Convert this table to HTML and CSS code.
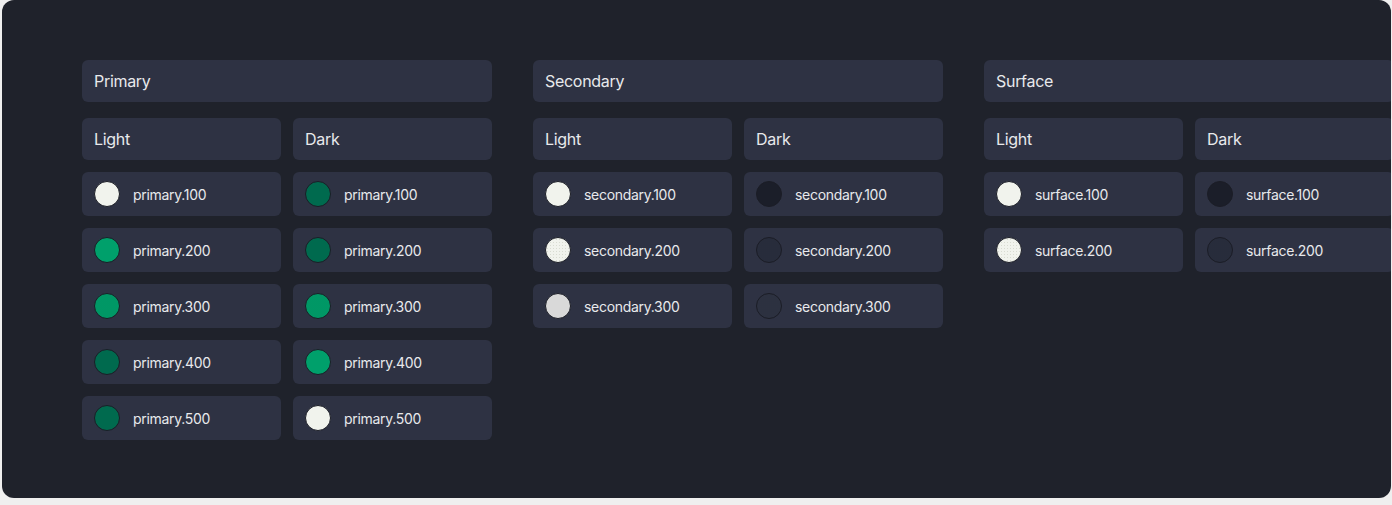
FILE: index.html
```html
<!DOCTYPE html>
<html lang="en">
<head>
    <meta charset="UTF-8">
    <title>Color Tokens</title>
    <link rel="stylesheet" href="styles.css">
</head>
<body>
    <div class="panel">
        <div class="groups">
            <div class="group">
                <div class="group-title">Primary</div>
                <div class="modes">
                    <div class="mode">
                        <div class="mode-title">Light</div>
                        <div class="token"><span class="swatch c-light"></span>primary.100</div>
                        <div class="token"><span class="swatch c-green"></span>primary.200</div>
                        <div class="token"><span class="swatch c-green dots"></span>primary.300</div>
                        <div class="token"><span class="swatch c-deep"></span>primary.400</div>
                        <div class="token"><span class="swatch c-deep"></span>primary.500</div>
                    </div>
                    <div class="mode">
                        <div class="mode-title">Dark</div>
                        <div class="token"><span class="swatch c-deep"></span>primary.100</div>
                        <div class="token"><span class="swatch c-deep"></span>primary.200</div>
                        <div class="token"><span class="swatch c-green dots"></span>primary.300</div>
                        <div class="token"><span class="swatch c-green"></span>primary.400</div>
                        <div class="token"><span class="swatch c-light"></span>primary.500</div>
                    </div>
                </div>
            </div>

            <div class="group">
                <div class="group-title">Secondary</div>
                <div class="modes">
                    <div class="mode">
                        <div class="mode-title">Light</div>
                        <div class="token"><span class="swatch c-light"></span>secondary.100</div>
                        <div class="token"><span class="swatch c-light dots-soft"></span>secondary.200</div>
                        <div class="token"><span class="swatch c-grey"></span>secondary.300</div>
                    </div>
                    <div class="mode">
                        <div class="mode-title">Dark</div>
                        <div class="token"><span class="swatch c-night"></span>secondary.100</div>
                        <div class="token"><span class="swatch c-dusk dots-dark"></span>secondary.200</div>
                        <div class="token"><span class="swatch c-slate dots-dark"></span>secondary.300</div>
                    </div>
                </div>
            </div>

            <div class="group">
                <div class="group-title">Surface</div>
                <div class="modes">
                    <div class="mode">
                        <div class="mode-title">Light</div>
                        <div class="token"><span class="swatch c-light"></span>surface.100</div>
                        <div class="token"><span class="swatch c-light dots-soft"></span>surface.200</div>
                    </div>
                    <div class="mode">
                        <div class="mode-title">Dark</div>
                        <div class="token"><span class="swatch c-night"></span>surface.100</div>
                        <div class="token"><span class="swatch c-dusk dots-dark"></span>surface.200</div>
                    </div>
                </div>
            </div>
        </div>
    </div>
</body>
</html>
```

FILE: styles.css
```css
body {
    margin: 0;
    background-color: #efefef;
    font-family: Inter, "Noto Sans", sans-serif;
}
.panel {
    margin-left: 2px;
    width: 1389px;
    height: 498px;
    background-color: #1f222b;
    border-radius: 12px;
    overflow: hidden;
    box-sizing: border-box;
    padding: 60px 0 0 80px;
}
.groups {
    display: flex;
    gap: 41px;
}
.group {
    flex: 0 0 410px;
}
.group-title, .mode-title, .token {
    background-color: #2e3243;
    border-radius: 6px;
    color: #e8e9ec;
    display: flex;
    align-items: center;
    letter-spacing: -0.3px;
}
.group-title {
    height: 42px;
    padding-left: 12px;
    font-size: 16px;
    margin-bottom: 16px;
}
.modes {
    display: flex;
    gap: 12px;
}
.mode {
    flex: 1;
    display: flex;
    flex-direction: column;
    gap: 12px;
}
.mode-title {
    height: 42px;
    padding-left: 12px;
    font-size: 16px;
}
.token {
    height: 44px;
    padding-left: 12px;
    font-size: 14px;
    gap: 13px;
}
.swatch {
    width: 24px;
    height: 24px;
    border-radius: 50%;
    border: 1.5px solid #1b1d26;
    flex: none;
}
.c-light { background-color: #f1f3ed; }
.c-green { background-color: #00a06b; }
.c-deep  { background-color: #006a4e; }
.c-grey  { background-color: #d9d9d9; }
.c-night { background-color: #1b1e29; }
.c-dusk  { background-color: #242836; }
.c-slate { background-color: #2a2e3d; }
.dots {
    background-image: radial-gradient(circle, rgba(0, 90, 60, 0.35) 0.5px, transparent 0.8px);
    background-size: 2px 2px;
}
.dots-soft {
    background-image: radial-gradient(circle, rgba(180, 185, 170, 0.4) 0.5px, transparent 0.8px);
    background-size: 3px 3px;
}
.dots-dark {
    background-image: radial-gradient(circle, rgba(60, 65, 85, 0.5) 0.5px, transparent 0.8px);
    background-size: 2px 2px;
}
```
